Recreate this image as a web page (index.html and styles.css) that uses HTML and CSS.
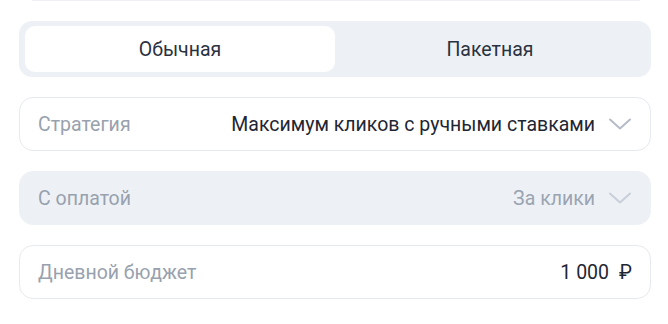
FILE: index.html
```html
<!DOCTYPE html>
<html lang="ru">
<head>
  <meta charset="UTF-8">
  <title>Настройки кампании</title>
  <link rel="stylesheet" href="styles.css">
</head>
<body>
  <div class="card-edge"></div>
  <div class="settings">
    <div class="tabs">
      <button class="tab active" type="button">Обычная</button>
      <button class="tab" type="button">Пакетная</button>
    </div>

    <div class="field">
      <span class="field-label">Стратегия</span>
      <span class="field-value">Максимум кликов с ручными ставками</span>
      <svg class="chevron" width="24" height="14" viewBox="0 0 24 14"><path d="M2 2.5l10 9L22 2.5" fill="none" stroke="currentColor" stroke-width="2" stroke-linecap="round" stroke-linejoin="round"/></svg>
    </div>

    <div class="field disabled">
      <span class="field-label">С оплатой</span>
      <span class="field-value">За клики</span>
      <svg class="chevron" width="24" height="14" viewBox="0 0 24 14"><path d="M2 2.5l10 9L22 2.5" fill="none" stroke="currentColor" stroke-width="2" stroke-linecap="round" stroke-linejoin="round"/></svg>
    </div>

    <div class="field">
      <span class="field-label">Дневной бюджет</span>
      <span class="field-value">1&nbsp;000<span class="currency">₽</span></span>
    </div>
  </div>
</body>
</html>
```

FILE: styles.css
```css
body {
  margin: 0;
  font-family: Roboto, "Noto Sans", sans-serif;
  background: #fff;
  color: #1f2633;
}

.card-edge {
  height: 0;
  margin: 0 28px 0 32px;
  border-bottom: 1px solid #eef0f3;
}

.settings {
  display: flex;
  flex-direction: column;
  gap: 20px;
  padding: 20px 17px 0 19px;
}

.tabs {
  display: grid;
  grid-template-columns: 1fr 1fr;
  padding: 5px 6px;
  height: 46px;
  background: #edf1f6;
  border-radius: 13px;
}

.tab {
  border: 0;
  background: transparent;
  font: inherit;
  font-size: 19.5px;
  color: #2a3140;
  border-radius: 10px;
  cursor: pointer;
}

.tab.active {
  background: #fff;
}

.field {
  display: flex;
  align-items: center;
  height: 52px;
  padding: 0 18px;
  border: 1px solid #e6e9ee;
  border-radius: 14px;
  font-size: 19.5px;
}

.field.disabled {
  border-color: #edf1f6;
  background: #edf1f6;
}

.field-label {
  flex: 1;
  color: #98a1ae;
}

.field-value {
  color: #1f2633;
}

.disabled .field-value {
  color: #9ba4b1;
}

.currency {
  margin-left: 10px;
}

.chevron {
  margin-left: 13px;
  color: #b4bcc7;
}

.disabled .chevron {
  color: #c8cfd8;
}
```
